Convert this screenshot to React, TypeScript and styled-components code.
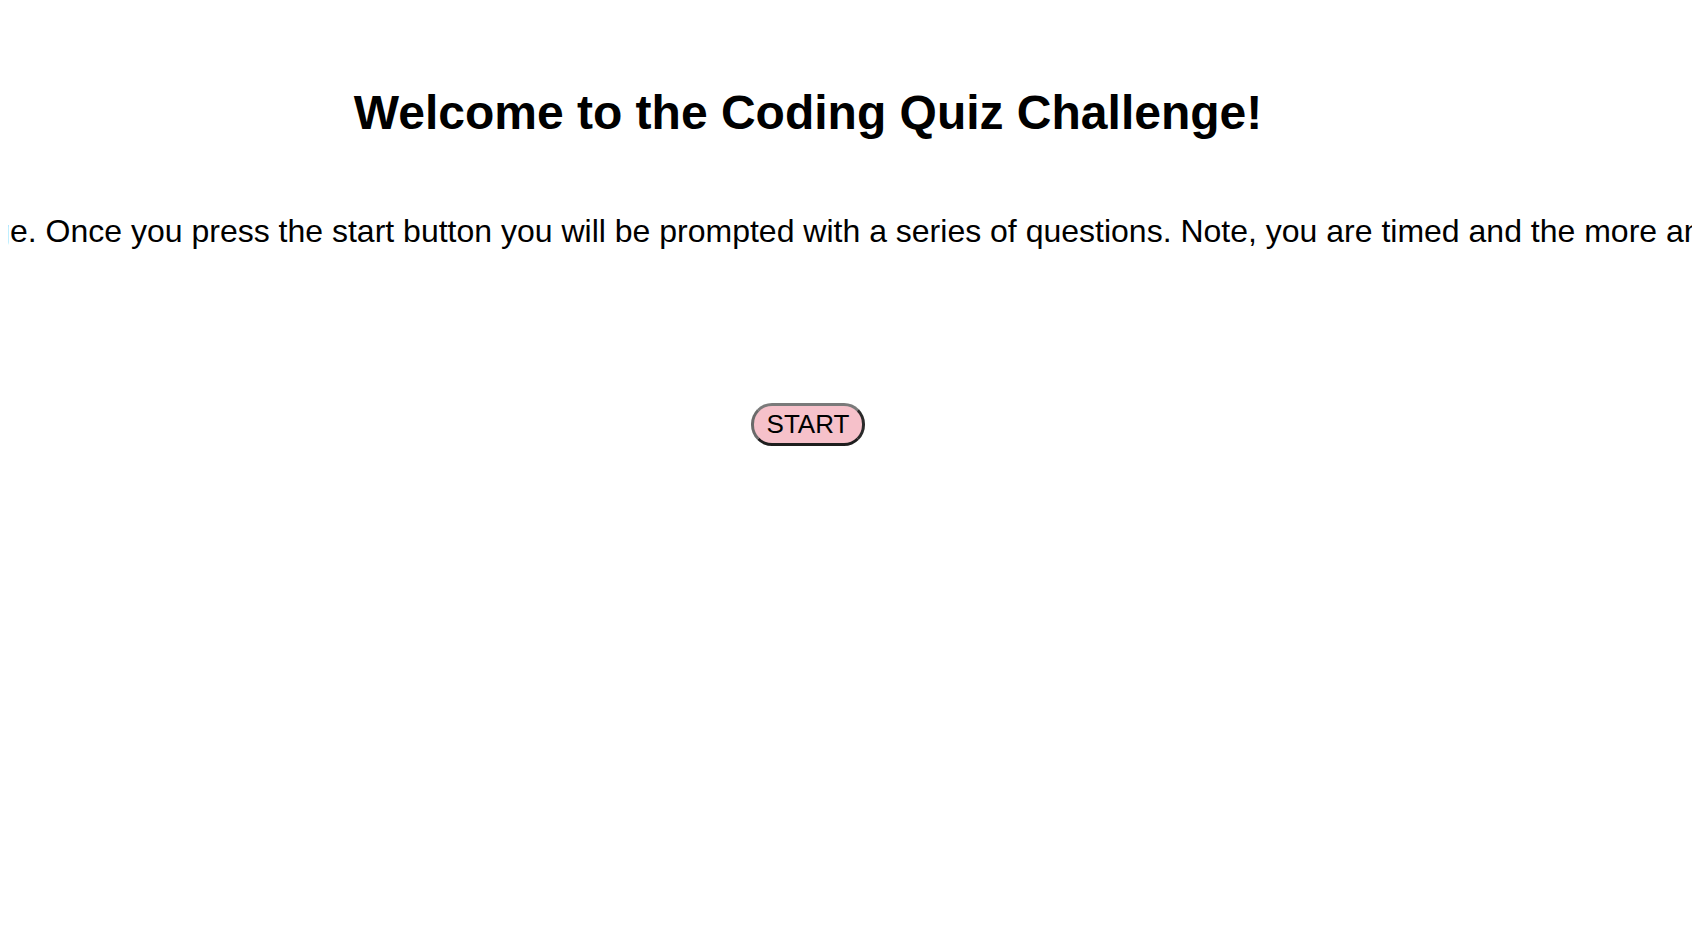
import React from "react";
import styled, { createGlobalStyle } from "styled-components";

const GlobalStyle = createGlobalStyle`
  body {
    margin: 8px;
    background: #ffffff;
    color: #000000;
    font-family: "Liberation Sans", Arial, sans-serif;
    overflow: hidden;
  }
`;

const Main = styled.main`
  width: 1600px;
  display: flex;
  flex-direction: column;
  align-items: center;
`;

const Title = styled.h1`
  font-size: 48px;
  font-weight: 700;
  margin: 77px 0 0;
`;

const Intro = styled.p`
  font-size: 32px;
  white-space: nowrap;
  margin: 73px 0 0;
`;

const StartButton = styled.button`
  margin-top: 153px;
  font-family: "Liberation Sans", Arial, sans-serif;
  font-size: 26px;
  line-height: 30px;
  padding: 3px 13px 4px;
  background: #f6c1ca;
  color: #000;
  border: 3px solid;
  border-color: #7a7a7a #2a2a2a #1e1e1e #6a6a6a;
  border-radius: 21px;
  cursor: pointer;
`;

export default function App() {
  return (
    <>
      <GlobalStyle />
      <Main>
        <Title>Welcome to the Coding Quiz Challenge!</Title>
        <Intro>
          Welcome to the coding quiz challenge. Once you press the start button
          you will be prompted with a series of questions. Note, you are timed
          and the more answers you miss, the less time.
        </Intro>
        <StartButton>START</StartButton>
      </Main>
    </>
  );
}
